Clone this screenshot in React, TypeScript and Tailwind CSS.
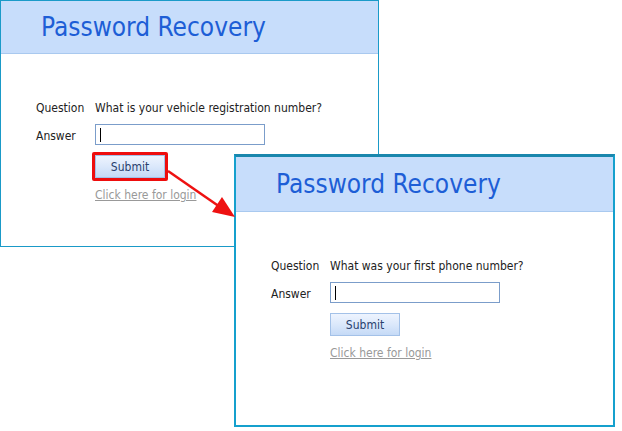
import React from 'react'

const font = { fontFamily: 'Tahoma, "DejaVu Sans Condensed", "Liberation Sans", sans-serif' }

type PanelProps = {
  question: string
  highlight?: boolean
  className: string
  headerClass: string
}

const Panel = ({ question, highlight, className, headerClass }: PanelProps) => (
  <div className={`absolute flex flex-col bg-white ${className}`}>
    <div
      className={`flex items-end border-b border-[#a9c9ef] bg-[#c7ddfb] pl-[40px] ${headerClass}`}
    >
      <h1 className="text-[26px] leading-[30px] text-[#1d5ed6]">Password Recovery</h1>
    </div>

    <div className="grid grid-cols-[59px_auto] pl-[35px] pt-[46px] text-[12px] text-[#222]">
      <span className="leading-[16px]">Question</span>
      <span className="leading-[16px]">{question}</span>

      <span className="mt-[10px] self-center leading-[16px]">Answer</span>
      <div className="mt-[8px] flex h-[21px] w-[170px] items-center border border-[#7b9dca] pl-[4px]">
        <span className="h-[14px] w-px bg-black" />
      </div>

      <span />
      <div className="mt-[10px] flex">
        <div
          className={
            highlight
              ? '-m-[3px] rounded-[2px] border-[3px] border-[#ee0d0d]'
              : ''
          }
        >
          <button className="flex h-[23px] w-[70px] items-center justify-center border border-[#a3c1e8] bg-gradient-to-b from-[#eef4fe] via-[#dbe8fb] to-[#c5daf6] text-[12px] text-[#29406e]">
            Submit
          </button>
        </div>
      </div>

      <span />
      <a className="mt-[9px] leading-[16px] text-[#999] underline">Click here for login</a>
    </div>
  </div>
)

export default function App() {
  return (
    <div className="relative h-[431px] w-[622px] overflow-hidden bg-white" style={font}>
      <Panel
        question="What is your vehicle registration number?"
        highlight
        className="left-0 top-0 h-[247px] w-[379px] border border-[#1a9ac8]"
        headerClass="h-[53px] pb-[11px]"
      />
      <Panel
        question="What was your first phone number?"
        className="left-[234px] top-[154px] h-[273px] w-[381px] border-2 border-t-[3px] border-[#15a0cd] border-t-[#1a87ad]"
        headerClass="h-[55px] pb-[12px]"
      />

      {/* red pointer from the first submit to the second form */}
      <svg className="absolute left-0 top-0" width="622" height="431">
        <line x1="168" y1="171" x2="220" y2="207" stroke="#ee1111" strokeWidth="2.5" />
        <polygon points="235,217 212,212 222,197" fill="#ee1111" />
      </svg>
    </div>
  )
}
